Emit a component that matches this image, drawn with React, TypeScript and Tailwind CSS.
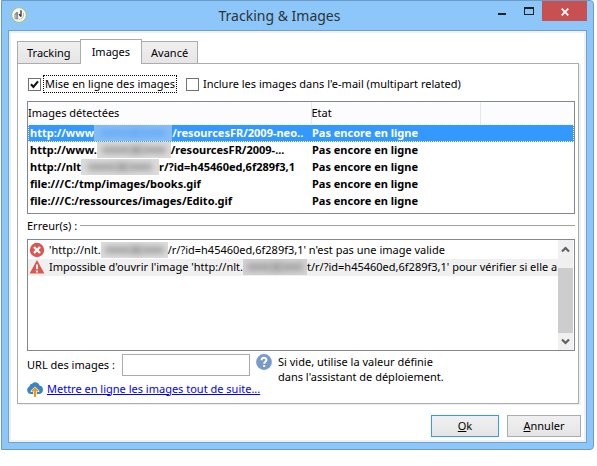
import { useState, type ReactNode } from "react";

const tabs = ["Tracking", "Images", "Avancé"];

type ImageRow = { before: string; hidden?: string; after?: string };

const images: ImageRow[] = [
  { before: "http://www", hidden: "w-[78px] bg-[#86bdf8]", after: "/resourcesFR/2009-neo.." },
  { before: "http://www.", hidden: "w-[74px] bg-[#dcdcdc]", after: "/resourcesFR/2009-..." },
  { before: "http://nlt", hidden: "w-[78px] bg-[#dcdcdc]", after: "r/?id=h45460ed,6f289f3,1" },
  { before: "file:///C:/tmp/images/books.gif" },
  { before: "file:///C:/ressources/images/Edito.gif" },
];

function Redacted({ className, light = false }: { className: string; light?: boolean }) {
  const tone = light ? "bg-[#66aaf5]" : "bg-[#9c9c9c]";
  return (
    <span className={`inline-flex h-4 shrink-0 items-center justify-center overflow-hidden px-1 ${className}`}>
      <span className={`h-1.5 w-7 blur-[3px] ${tone}`} />
      <span className={`h-2 w-3 blur-[3px] ${tone}`} />
      <span className={`h-1.5 w-6 blur-[3px] ${tone}`} />
    </span>
  );
}

function Check({ id, label, initial, focused = false }: { id: string; label: string; initial: boolean; focused?: boolean }) {
  const [on, setOn] = useState(initial);
  return (
    <div className="flex items-center gap-0.5">
      <span className="grid">
        <input
          id={id}
          type="checkbox"
          checked={on}
          onChange={(e) => setOn(e.target.checked)}
          className="col-start-1 row-start-1 size-[13px] appearance-none border border-[#707070] bg-white"
        />
        {on && (
          <svg viewBox="0 0 13 13" className="pointer-events-none col-start-1 row-start-1 size-[13px]" aria-hidden="true">
            <path d="M3 6.3 5.4 9 10 3.4" fill="none" stroke="#111" strokeWidth="2.1" />
          </svg>
        )}
      </span>
      <label htmlFor={id} className={`border border-dotted px-px leading-4 ${focused ? "border-black" : "border-transparent"}`}>
        {label}
      </label>
    </div>
  );
}

function ErrorLine({ icon, children, shaded = false }: { icon: ReactNode; children: ReactNode; shaded?: boolean }) {
  return (
    <li className={`flex h-[17px] items-center gap-1 overflow-hidden pl-px whitespace-nowrap ${shaded ? "bg-[#f0f0f0]" : ""}`}>
      {icon}
      <span className="flex items-center">{children}</span>
    </li>
  );
}

function Chevron({ d }: { d: string }) {
  return (
    <svg viewBox="0 0 9 7" className="h-[7px] w-[9px]" aria-hidden="true">
      <path d={d} fill="none" stroke="#606060" strokeWidth="2.2" />
    </svg>
  );
}

export default function App() {
  const [tab, setTab] = useState("Images");
  return (
    <div className="bg-white pr-[3px] pl-px font-['Noto_Sans',sans-serif] text-[11px] leading-4 text-black">
      <div className="rounded-r-sm border border-[#6b9cc8] bg-[#8dc7f9] px-1.5 pb-1.5">
        <header className="relative flex h-[29px] items-start justify-between">
          <svg viewBox="0 0 16 16" className="mt-1.5 ml-[3px] size-4" aria-hidden="true">
            <circle cx="8" cy="8" r="7.4" fill="#f4f4f4" stroke="#9cc46a" />
            <path d="M3.5 7 5.5 5H7v7.5L3.5 12Z" fill="#8c8c8c" />
            <path d="M4.8 7.5v4M7 10.5l2 2.5" stroke="#c8c8c8" />
            <path d="M10 3.2v6.3M8 7.2l2 2.4" fill="none" stroke="#333" strokeWidth="1.3" />
            <path d="M10 12.5 12.5 9V6" fill="none" stroke="#bdbdbd" />
          </svg>
          <h1 className="pointer-events-none absolute inset-x-0 top-1 pr-9 text-center text-[14px] leading-[22px] text-[#2c3338]">
            Tracking &amp; Images
          </h1>
          <div className="flex h-5 items-center">
            <button type="button" aria-label="Réduire" className="flex h-5 w-[27px] items-center justify-center">
              <span className="mt-[5px] h-0.5 w-2 bg-[#222]" />
            </button>
            <button type="button" aria-label="Agrandir" className="flex h-5 w-[27px] items-center justify-center">
              <span className="h-2 w-2.5 border border-t-2 border-[#222]" />
            </button>
            <button type="button" aria-label="Fermer" className="flex h-5 w-[45px] items-center justify-center bg-[#c75050]">
              <svg viewBox="0 0 8 8" className="mt-0.5 size-2" aria-hidden="true">
                <path d="m.7.7 6.6 6.6M7.3.7.7 7.3" stroke="#fff" strokeWidth="1.7" />
              </svg>
            </button>
          </div>
        </header>

        <main className="border border-[#6fa3cf] bg-white">
          <div className="border-2 border-[#f0f0f0] pt-1.5 pr-[3px] pb-[3px] pl-1.5">
            <div role="tablist" className="flex items-end">
              {tabs.map((name) => (
                <button
                  key={name}
                  type="button"
                  role="tab"
                  aria-selected={name === tab}
                  onClick={() => setTab(name)}
                  className={
                    name === tab
                      ? "relative -mx-px -mb-px h-[25px] border border-b-0 border-[#acacac] bg-white px-[11px]"
                      : "h-[22px] border border-b-0 border-[#acacac] bg-gradient-to-b from-[#f0f0f0] to-[#e5e5e5] px-[9px]"
                  }
                >
                  {name}
                </button>
              ))}
            </div>

            <section
              role="tabpanel"
              aria-label={tab}
              className="mr-0.5 border border-[#acacac] pr-[3px] pb-1.5 pl-[9px] shadow-[2px_1px_0_#f0f0f0]"
            >
              <div className="flex gap-[9px] pt-[11px] pl-px">
                <Check id="publish" label="Mise en ligne des images" initial focused />
                <Check id="inline" label="Inclure les images dans l'e-mail (multipart related)" initial={false} />
              </div>

              <div className="mt-2 border border-[#828790] pb-[3px]">
                <table className="w-full table-fixed border-collapse text-left whitespace-nowrap">
                  <colgroup>
                    <col className="w-[283px]" />
                    <col className="w-[169px]" />
                    <col />
                  </colgroup>
                  <thead>
                    <tr className="h-[22px] border-b border-[#e8eef7] bg-[#fcfcfc]">
                      <th className="border-r border-[#e3e8f0] font-normal">Images détectées</th>
                      <th className="border-r border-[#e3e8f0] font-normal">Etat</th>
                      <th aria-label="Autres" />
                    </tr>
                  </thead>
                  <tbody className="font-bold">
                    {images.map((row, i) => (
                      <tr
                        key={i}
                        aria-selected={i === 0}
                        className={i === 0 ? "h-[17px] bg-[#3399ff] text-white outline outline-dotted -outline-offset-1 outline-white" : "h-[17px]"}
                      >
                        <td className="p-0 pl-0.5">
                          <span className="flex h-[17px] items-center">
                            {row.before}
                            {row.hidden && <Redacted className={row.hidden} light={i === 0} />}
                            {row.after}
                          </span>
                        </td>
                        <td className="p-0 pl-px">Pas encore en ligne</td>
                        <td className="p-0" />
                      </tr>
                    ))}
                  </tbody>
                </table>
              </div>

              <h2 className="mt-[3px] flex h-[18px] items-center gap-[3px]">
                Erreur(s) :<span className="h-px flex-1 bg-[#a0a0a0]" />
              </h2>

              <div className="mt-1 flex h-[112px] border border-[#828790] pr-px">
                <ul className="min-w-0 flex-1 pt-0.5">
                  <ErrorLine
                    icon={
                      <svg viewBox="0 0 16 16" className="size-4 shrink-0" aria-hidden="true">
                        <circle cx="8" cy="8" r="7.2" fill="#df5550" />
                        <path d="m5 5 6 6m0-6-6 6" stroke="#fff" strokeWidth="2.4" />
                      </svg>
                    }
                  >
                    'http://nlt.<Redacted className="w-[67px] bg-[#dddddd]" />/r/?id=h45460ed,6f289f3,1' n'est pas une image valide
                  </ErrorLine>
                  <ErrorLine
                    shaded
                    icon={
                      <svg viewBox="0 0 16 16" className="size-4 shrink-0" aria-hidden="true">
                        <path d="M8 1 15.4 14.6H.6Z" fill="#df5550" />
                        <path d="M8 5.5v4.7M8 11.5v2" stroke="#fff" strokeWidth="1.8" />
                      </svg>
                    }
                  >
                    Impossible d'ouvrir l'image 'http://nlt.<Redacted className="w-[64px] bg-[#d4d2d4]" />t/r/?id=h45460ed,6f289f3,1' pour vérifier si elle a
                  </ErrorLine>
                </ul>
                <div className="flex w-[15px] flex-col items-center bg-[#f0f0f0]">
                  <span className="flex h-[28px] items-start pt-1.5"><Chevron d="M1 5.5 4.5 2 8 5.5" /></span>
                  <span className="w-full flex-1 bg-[#cdcdcd]" />
                  <span className="flex h-[17px] items-center"><Chevron d="M1 1.5 4.5 5 8 1.5" /></span>
                </div>
              </div>

              <div className="mt-[3px] grid grid-cols-[95px_128px_28px_1fr] gap-y-[5px]">
                <label htmlFor="url" className="self-center whitespace-nowrap">URL des images :</label>
                <input id="url" type="text" className="h-[22px] border border-[#ababab] bg-white px-1 outline-none" />
                <svg viewBox="0 0 16 16" className="size-4 justify-self-center" aria-hidden="true">
                  <circle cx="8" cy="8" r="7.9" fill="#7799cb" />
                  <path d="M5.6 6.2C5.6 3 10.4 3.2 10.4 6c0 1.8-2.2 1.9-2.2 3.8" fill="none" stroke="#fff" strokeWidth="2" />
                  <path d="M7.1 11h2.1v2H7.1z" fill="#fff" />
                </svg>
                <p className="row-span-2 leading-[15px]">
                  Si vide, utilise la valeur définie
                  <br />
                  dans l'assistant de déploiement.
                </p>
                <div className="col-span-3 flex items-center gap-1">
                  <svg viewBox="0 0 16 16" className="size-4 shrink-0" aria-hidden="true">
                    <path
                      d="M4 13A3.9 3.9 0 0 1 2.4 5.6 3.6 3.6 0 0 1 5.4 2.4 4.6 4.6 0 0 1 12.6 4.4 4.4 4.4 0 0 1 12.4 13Z"
                      fill="#3584cc"
                    />
                    <path d="M8 5.4 3.8 9.6V11h2.4v2.4h3.6V11h2.4V9.6Z" fill="#fff" />
                    <path d="M8 16V8M5 10.4l3-3 3 3" fill="none" stroke="#f09a14" strokeWidth="2" />
                  </svg>
                  <a href="#" className="text-[#0000ff] underline">Mettre en ligne les images tout de suite...</a>
                </div>
              </div>
            </section>

            <footer className="mt-[11px] flex justify-end gap-2">
              <button type="button" className="h-[22px] w-[68px] border border-[#3399ff] bg-gradient-to-b from-[#f0f0f0] to-[#e5e5e5]">
                <span className="underline">O</span>k
              </button>
              <button type="button" className="h-[22px] w-[74px] border border-[#acacac] bg-gradient-to-b from-[#f0f0f0] to-[#e5e5e5]">
                <span className="underline">A</span>nnuler
              </button>
            </footer>
          </div>
        </main>
      </div>
    </div>
  );
}
